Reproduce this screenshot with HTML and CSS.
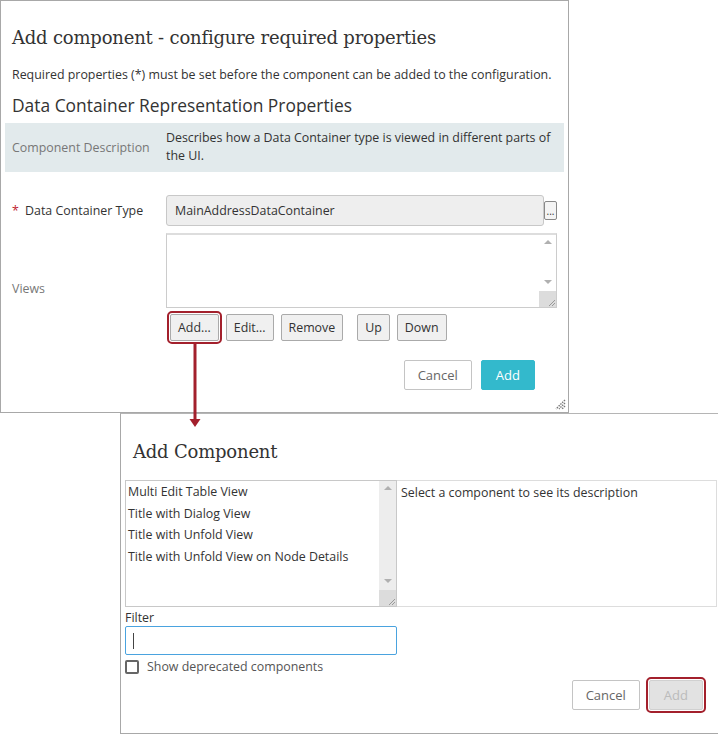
FILE: index.html
```html
<!DOCTYPE html>
<html>
    <head>
        <title>Add component</title>
        <link rel="stylesheet" href="styles.css">
    </head>
    <body>
        <div class="dialog dlg-config">
            <h2 class="dlg-title">Add component - configure required properties</h2>
            <p class="note">Required properties (*) must be set before the component can be added to the configuration.</p>
            <h3 class="section">Data Container Representation Properties</h3>
            <div class="desc-band">
                <span class="prop-label muted">Component Description</span>
                <span class="desc">Describes how a Data Container type is viewed in different parts of the UI.</span>
            </div>
            <div class="prop-row type-row">
                <span class="prop-label"><span class="req">*</span> Data Container Type</span>
                <div class="field-wrap">
                    <div class="field readonly">MainAddressDataContainer</div>
                    <button class="dots">...</button>
                </div>
            </div>
            <div class="prop-row views-row">
                <span class="prop-label muted">Views</span>
                <div class="textbox">
                    <div class="scroll light">
                        <span class="arr up"></span>
                        <span class="arr down"></span>
                        <span class="grip"><svg width="9" height="9" viewBox="0 0 9 9"><path d="M8 2 L2 8 M8 5 L5 8" stroke="#999" stroke-width="1"/></svg></span>
                    </div>
                </div>
            </div>
            <div class="list-buttons">
                <button class="btn marked">Add...</button>
                <button class="btn">Edit...</button>
                <button class="btn">Remove</button>
                <button class="btn spaced">Up</button>
                <button class="btn">Down</button>
            </div>
            <div class="dlg-footer">
                <button class="btn-flat">Cancel</button>
                <button class="btn-primary">Add</button>
            </div>
            <svg class="dlg-grip" width="12" height="12" viewBox="0 0 12 12"><path d="M11 2 L2 11 M11 5 L5 11 M11 8 L8 11" stroke="#777" stroke-width="1.4" stroke-dasharray="1.5 1"/></svg>
        </div>

        <svg class="callout" width="14" height="90" viewBox="0 0 14 90"><path d="M7 0 V78" stroke="#a3202c" stroke-width="3"/><path d="M1.5 76 H12.5 L7 84 Z" fill="#a3202c"/></svg>

        <div class="dialog dlg-pick">
            <h2 class="dlg-title">Add Component</h2>
            <div class="pick-panes">
                <div class="pick-list">
                    <ul>
                        <li>Multi Edit Table View</li>
                        <li>Title with Dialog View</li>
                        <li>Title with Unfold View</li>
                        <li>Title with Unfold View on Node Details</li>
                    </ul>
                    <div class="scroll dark">
                        <span class="arr up"></span>
                        <span class="arr down"></span>
                        <span class="grip"><svg width="9" height="9" viewBox="0 0 9 9"><path d="M8 2 L2 8 M8 5 L5 8" stroke="#999" stroke-width="1"/></svg></span>
                    </div>
                </div>
                <div class="pick-desc">Select a component to see its description</div>
            </div>
            <label class="filter-label">Filter</label>
            <div class="filter"><span class="caret"></span></div>
            <label class="check"><span class="box"></span>Show deprecated components</label>
            <div class="dlg-footer">
                <button class="btn-flat">Cancel</button>
                <button class="btn-disabled marked">Add</button>
            </div>
        </div>
    </body>
</html>
```
FILE: styles.css
```css
body {
	margin: 0;
	background-color: #fff;
	color: #333;
	font-family: "Open Sans", "Noto Sans", sans-serif;
	font-size: 12.4px;
	position: relative;
	width: 718px;
	height: 734px;
	overflow: hidden;
}

button {
	font-family: inherit;
	font-size: 12.4px;
	color: #333;
	cursor: pointer;
}

.dialog {
	position: relative;
	box-sizing: border-box;
	border: 1px solid #a8a8a8;
	background-color: #fff;
}

.dlg-config {
	width: 569px;
	height: 413px;
	padding: 0 4px;
}

.dlg-pick {
	width: 598px;
	height: 321px;
	margin-left: 120px;
	border-right: none;
	padding: 0 1px 0 4px;
	border-top-color: #b5b5b5;
}

.dlg-title {
	font-family: "DejaVu Serif", serif;
	font-weight: 400;
	font-size: 18px;
	letter-spacing: -0.2px;
	line-height: 24px;
	color: #333;
	margin: 0;
	padding: 25px 0 0 7px;
}

.note {
	margin: 17px 0 0 7px;
	line-height: 16px;
}

.section {
	font-weight: 400;
	font-size: 17.4px;
	line-height: 22px;
	margin: 11px 0 0 7px;
	color: #333;
}

.desc-band {
	display: flex;
	align-items: center;
	background-color: #e2eaec;
	margin-top: 7px;
	padding: 6px 0 7px 7px;
	min-height: 36px;
}

.prop-label {
	width: 154px;
	flex-shrink: 0;
}

.muted {
	color: #777;
}

.desc {
	line-height: 18px;
	padding-right: 6px;
}

.req {
	color: #c0232e;
	margin-right: 3px;
}

.prop-row {
	display: flex;
	align-items: center;
	padding-left: 7px;
}

.type-row {
	margin-top: 23px;
}

.field-wrap {
	display: flex;
	align-items: center;
	width: 391px;
}

.field {
	flex: 1;
	box-sizing: border-box;
	height: 31px;
	line-height: 29px;
	padding-left: 8px;
	border: 1px solid #c8c8c8;
	border-radius: 3px;
}

.readonly {
	background-color: #eee;
}

.dots {
	width: 13px;
	height: 19px;
	padding: 0;
	font-size: 10px;
	line-height: 10px;
	background-color: #f4f4f4;
	border: 1px solid #888;
	border-radius: 2px;
}

.views-row {
	margin-top: 7px;
	align-items: flex-end;
}

.views-row .prop-label {
	padding-bottom: 11px;
}

.textbox {
	position: relative;
	box-sizing: border-box;
	width: 391px;
	height: 75px;
	border: 1px solid #ccc;
	border-top: 2px solid #ddd;
	display: flex;
	justify-content: flex-end;
}

.scroll {
	position: relative;
	width: 17px;
	height: 100%;
}

.scroll.dark {
	background-color: #ededed;
}

.arr {
	position: absolute;
	left: 5px;
	width: 0;
	height: 0;
	border-left: 4px solid transparent;
	border-right: 4px solid transparent;
}

.arr.up {
	top: 5px;
	border-bottom: 4px solid #b0b0b0;
}

.arr.down {
	bottom: 23px;
	border-top: 4px solid #b0b0b0;
}

.grip {
	position: absolute;
	bottom: 0;
	left: 0;
	width: 17px;
	height: 16px;
	background-color: #dcdcdc;
	display: flex;
	align-items: flex-end;
	justify-content: flex-end;
}

.list-buttons {
	display: flex;
	gap: 7px;
	margin: 6px 0 0 165px;
}

.btn {
	height: 27px;
	padding: 0 7px;
	background-color: #f0f0f0;
	border: 1px solid #aaa;
	border-radius: 2px;
}

.spaced {
	margin-left: 7px;
}

.marked {
	outline: 2px solid #a3202c;
	outline-offset: 1px;
}

.dlg-footer {
	display: flex;
	justify-content: flex-end;
	gap: 9px;
}

.dlg-config .dlg-footer {
	margin: 19px 29px 0 0;
}

.btn-flat,
.btn-primary,
.btn-disabled {
	height: 30px;
	padding: 0 14px;
	border-radius: 2px;
	font-size: 13px;
}

.btn-flat {
	background-color: #fff;
	border: 1px solid #c4c4c4;
	color: #666;
	padding: 0 13px;
}

.btn-primary {
	background-color: #33b9cc;
	border: 1px solid #33b9cc;
	color: #fff;
}

.btn-disabled {
	background-color: #e2e2e2;
	border: 1px solid #d0d0d0;
	color: #bbb;
	cursor: default;
}

.dlg-grip {
	position: absolute;
	right: 2px;
	bottom: 2px;
}

.callout {
	position: absolute;
	z-index: 2;
	left: 188px;
	top: 343px;
}

.dlg-pick .dlg-title {
	padding: 26px 0 0 8px;
}

.pick-panes {
	display: flex;
	margin-top: 16px;
	height: 127px;
}

.pick-list {
	box-sizing: border-box;
	width: 272px;
	border: 1px solid #c8c8c8;
	display: flex;
}

.pick-list ul {
	flex: 1;
	list-style: none;
	margin: 0;
	padding: 0 0 0 2px;
}

.pick-list li {
	line-height: 21.5px;
}

.pick-desc {
	flex: 1;
	box-sizing: border-box;
	border: 1px solid #ddd;
	border-left: none;
	padding: 3px 0 0 4px;
}

.filter-label {
	display: block;
	margin-top: 3px;
	line-height: 16px;
}

.filter {
	box-sizing: border-box;
	width: 272px;
	height: 29px;
	margin-top: 0;
	border: 1px solid #4aa3df;
	border-radius: 2px;
	padding: 6px 0 0 7px;
}

.caret {
	display: block;
	width: 1px;
	height: 16px;
	background-color: #444;
}

.check {
	display: flex;
	align-items: center;
	gap: 8px;
	margin-top: 4px;
	line-height: 16px;
	color: #555;
}

.box {
	box-sizing: border-box;
	width: 14px;
	height: 14px;
	border: 2px solid #666;
	border-radius: 2px;
}

.dlg-pick .dlg-footer {
	margin: 5px 14px 0 0;
}
```
